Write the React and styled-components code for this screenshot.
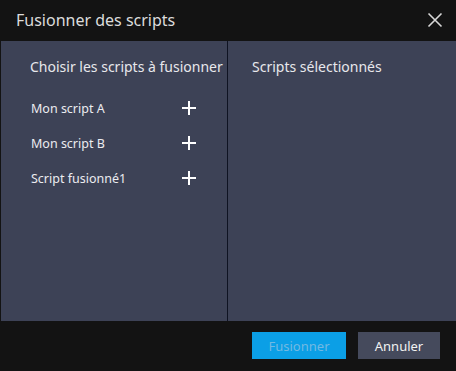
import React from 'react'
import styled, { createGlobalStyle } from 'styled-components'

const GlobalStyle = createGlobalStyle`
    html, body {
        margin: 0;
        padding: 0;
        background: #131313;
    }
    body {
        font-family: 'Noto Sans', 'Open Sans', sans-serif;
    }
`;

const scripts = ['Mon script A', 'Mon script B', 'Script fusionné1'];

function PlusIcon() {
    return (
        <svg width="16" height="16" viewBox="0 0 16 16">
            <path d="M8 1v14M1 8h14" stroke="#ffffff" strokeWidth="2" />
        </svg>
    )
}

function CloseIcon() {
    return (
        <svg width="16" height="16" viewBox="0 0 16 16">
            <path d="M1.5 1.5l13 13M14.5 1.5l-13 13" stroke="#d8d8d8" strokeWidth="1.6" />
        </svg>
    )
}

export default function App() {
    return (
        <>
            <GlobalStyle />
            <Dialog>
                <TitleBar>
                    <Title>Fusionner des scripts</Title>
                    <CloseButton><CloseIcon /></CloseButton>
                </TitleBar>
                <Body>
                    <Column>
                        <Heading>Choisir les scripts à fusionner</Heading>
                        <List>
                            {scripts.map((name) => (
                                <Row key={name}>
                                    <RowLabel>{name}</RowLabel>
                                    <AddButton><PlusIcon /></AddButton>
                                </Row>
                            ))}
                        </List>
                    </Column>
                    <Column>
                        <Heading>Scripts sélectionnés</Heading>
                    </Column>
                </Body>
                <Footer>
                    <Button primary>Fusionner</Button>
                    <Button>Annuler</Button>
                </Footer>
            </Dialog>
        </>
    )
}


/**STYLED COMPONENTS */

const Dialog = styled.div`
    width: 456px;
    height: 371px;
    background: #131313;
    display: flex;
    flex-direction: column;
    overflow: hidden;
`;

const TitleBar = styled.div`
    height: 41px;
    display: flex;
    align-items: center;
    justify-content: space-between;
    padding: 0 13px 0 16px;
    box-sizing: border-box;
`;

const Title = styled.div`
    font-size: 16px;
    color: #dcdcdc;
    margin-top: -2px;
`;

const CloseButton = styled.div`
    display: flex;
    align-items: center;
    margin-top: -2px;
`;

const Body = styled.div`
    height: 280px;
    margin-left: 1px;
    display: grid;
    grid-template-columns: 226px 1fr;
    gap: 1px;
    background: #0f1322;
`;

const Column = styled.div`
    background: #3d4256;
    padding: 16px 0 0 29px;
    box-sizing: border-box;
    &:last-child {
        padding-left: 24px;
    }
`;

const Heading = styled.div`
    font-size: 14px;
    color: #e8e8ec;
    line-height: 20px;
    white-space: nowrap;
`;

const List = styled.div`
    margin-top: 21px;
    display: flex;
    flex-direction: column;
    gap: 15px;
`;

const Row = styled.div`
    height: 20px;
    display: flex;
    align-items: center;
    width: 167px;
    justify-content: space-between;
`;

const RowLabel = styled.div`
    font-size: 12.5px;
    color: #ececf0;
    padding-left: 1px;
`;

const AddButton = styled.div`
    display: flex;
    align-items: center;
`;

const Footer = styled.div`
    flex: 1;
    display: flex;
    justify-content: flex-end;
    align-items: flex-start;
    gap: 12px;
    padding: 11px 16px 0 0;
`;

const Button = styled.div`
    height: 27px;
    width: ${(p) => (p.primary ? '94px' : '82px')};
    display: flex;
    align-items: center;
    justify-content: center;
    font-size: 13px;
    background: ${(p) => (p.primary ? '#0b9fe6' : '#454a5c')};
    color: ${(p) => (p.primary ? '#72b9e2' : '#f2f2f2')};
`;
